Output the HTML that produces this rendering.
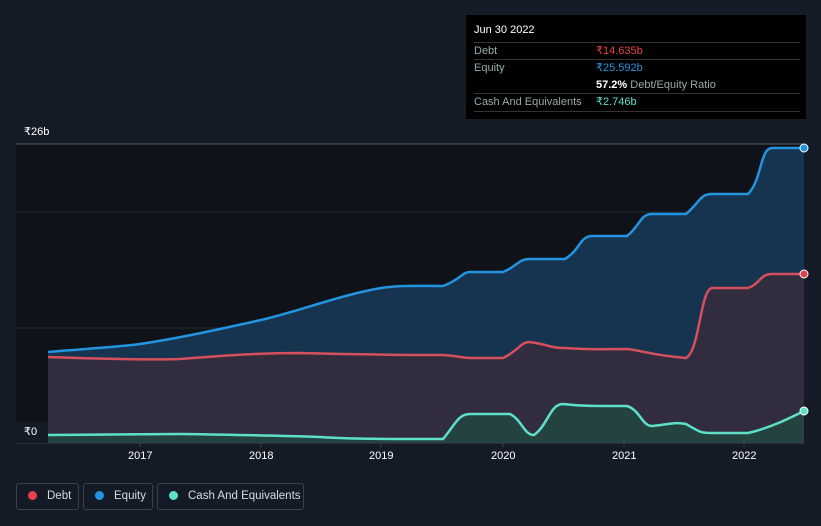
<!DOCTYPE html><html><head><style>
body{margin:0;width:821px;height:526px;background:#151b26;font-family:"Liberation Sans",sans-serif;overflow:hidden;position:relative}
.t{position:absolute;color:#fff;font-size:11px}
#tip{position:absolute;left:466px;top:15px;width:340px;height:104px;background:#000;}
#tip .r{position:absolute;left:8px;width:326px;font-size:11px;color:#9aa;border-top:1px solid #333}
.lg{position:absolute;top:483px;height:27px;border:1px solid #3a404c;border-radius:3px;color:#d7dbe0;font-size:11.5px;line-height:25px;box-sizing:border-box;white-space:nowrap;overflow:hidden}
.lg i{display:inline-block;width:9px;height:9px;border-radius:50%;margin:0 10px 0 11px;vertical-align:-1px}
</style></head><body>
<svg width="821" height="526" style="position:absolute;left:0;top:0">
<rect x="16" y="144" width="788" height="299" fill="#0f1218"/>
<line x1="16" y1="144" x2="804" y2="144" stroke="#555a62"/>
<line x1="16" y1="212" x2="804" y2="212" stroke="#262c36"/>
<line x1="16" y1="328" x2="804" y2="328" stroke="#262c36"/>
<path d="M48,352 C80,349 120,347 140,344 C180,338 220,329 261,320 C300,311 340,295 381,288 C400,285 420,286 443,286 C460,280 462,272 470,272 L503,272 C518,266 518,259 530,259 L565,259 C580,250 580,236 592,236 L627,236 C640,226 640,214 652,214 L686,214 C700,202 700,194 712,194 L748,194 C762,180 760,148 772,148 L804,148 L804,443 L48,443Z" fill="#163450"/>
<path d="M48,357 C100,359 160,360 180,359 C230,355 261,353 300,353 C340,354 381,355 443,355 C460,356 462,358 470,358 L503,358 C520,350 520,342 530,342 C550,345 550,348 565,348 C590,350 600,349 627,349 C640,350 650,355 686,358 C700,350 700,290 712,288 L748,288 C760,284 760,274 772,274 L804,274 L804,443 L48,443Z" fill="#322d3e"/>
<path d="M48,435 L180,434 C250,435 290,436 320,437 C350,439 381,439 443,439 C455,425 458,414 470,414 L510,414 C522,420 524,435 534,435 C548,425 550,404 563,404 C580,406 590,406 627,406 C640,410 642,426 652,426 C670,424 675,422 686,424 C700,432 700,433 712,433 L748,433 C770,428 790,418 804,411 L804,443 L48,443Z" fill="#24423f"/>
<path d="M48,352 C80,349 120,347 140,344 C180,338 220,329 261,320 C300,311 340,295 381,288 C400,285 420,286 443,286 C460,280 462,272 470,272 L503,272 C518,266 518,259 530,259 L565,259 C580,250 580,236 592,236 L627,236 C640,226 640,214 652,214 L686,214 C700,202 700,194 712,194 L748,194 C762,180 760,148 772,148 L804,148" fill="none" stroke="#2394df" stroke-width="2.5"/>
<path d="M48,357 C100,359 160,360 180,359 C230,355 261,353 300,353 C340,354 381,355 443,355 C460,356 462,358 470,358 L503,358 C520,350 520,342 530,342 C550,345 550,348 565,348 C590,350 600,349 627,349 C640,350 650,355 686,358 C700,350 700,290 712,288 L748,288 C760,284 760,274 772,274 L804,274" fill="none" stroke="#d4505c" stroke-width="2.5"/>
<path d="M48,435 L180,434 C250,435 290,436 320,437 C350,439 381,439 443,439 C455,425 458,414 470,414 L510,414 C522,420 524,435 534,435 C548,425 550,404 563,404 C580,406 590,406 627,406 C640,410 642,426 652,426 C670,424 675,422 686,424 C700,432 700,433 712,433 L748,433 C770,428 790,418 804,411" fill="none" stroke="#5ee0c8" stroke-width="2.5"/>
<line x1="16" y1="443" x2="804" y2="443" stroke="#3a404a"/>
<g stroke="#3a404a"><line x1="140" y1="443" x2="140" y2="447"/><line x1="261" y1="443" x2="261" y2="447"/><line x1="381" y1="443" x2="381" y2="447"/><line x1="503" y1="443" x2="503" y2="447"/><line x1="624" y1="443" x2="624" y2="447"/><line x1="744" y1="443" x2="744" y2="447"/></g>
<rect x="16" y="422" width="32" height="21" fill="#151b26"/>
<circle cx="804" cy="148" r="4" fill="#2394df" stroke="#fff" stroke-width="1"/>
<circle cx="804" cy="274" r="4" fill="#e0404c" stroke="#fff" stroke-width="1"/>
<circle cx="804" cy="411" r="4" fill="#5ee0c8" stroke="#fff" stroke-width="1"/>
</svg>
<div class="t" style="left:24px;top:125px">₹26b</div>
<div class="t" style="left:24px;top:425px">₹0</div>
<div class="t" style="left:128px;top:450px">2017</div>
<div class="t" style="left:249px;top:450px">2018</div>
<div class="t" style="left:369px;top:450px">2019</div>
<div class="t" style="left:491px;top:450px">2020</div>
<div class="t" style="left:612px;top:450px">2021</div>
<div class="t" style="left:732px;top:450px">2022</div>
<div id="tip">
<div style="position:absolute;left:8px;top:9px;color:#fff;font-size:11px">Jun 30 2022</div>
<div class="r" style="top:27px;height:17px;line-height:17px">Debt<span style="position:absolute;left:122px;color:#e8404c">₹14.635b</span></div>
<div class="r" style="top:44px;height:17px;line-height:17px">Equity<span style="position:absolute;left:122px;color:#2394df">₹25.592b</span></div>
<div style="position:absolute;left:130px;top:62px;font-size:11px;color:#9aa;line-height:17px"><b style="color:#fff">57.2%</b> Debt/Equity Ratio</div>
<div class="r" style="top:78px;height:17px;line-height:17px">Cash And Equivalents<span style="position:absolute;left:122px;color:#5ee0c8">₹2.746b</span></div>
<div style="position:absolute;left:8px;top:96px;width:326px;border-top:1px solid #333"></div>
</div>
<div class="lg" style="left:16px;width:63px"><i style="background:#e8404c"></i>Debt</div>
<div class="lg" style="left:83px;width:70px"><i style="background:#2394df"></i>Equity</div>
<div class="lg" style="left:157px;width:147px"><i style="background:#5ee0c8"></i>Cash And Equivalents</div>
</body></html>
